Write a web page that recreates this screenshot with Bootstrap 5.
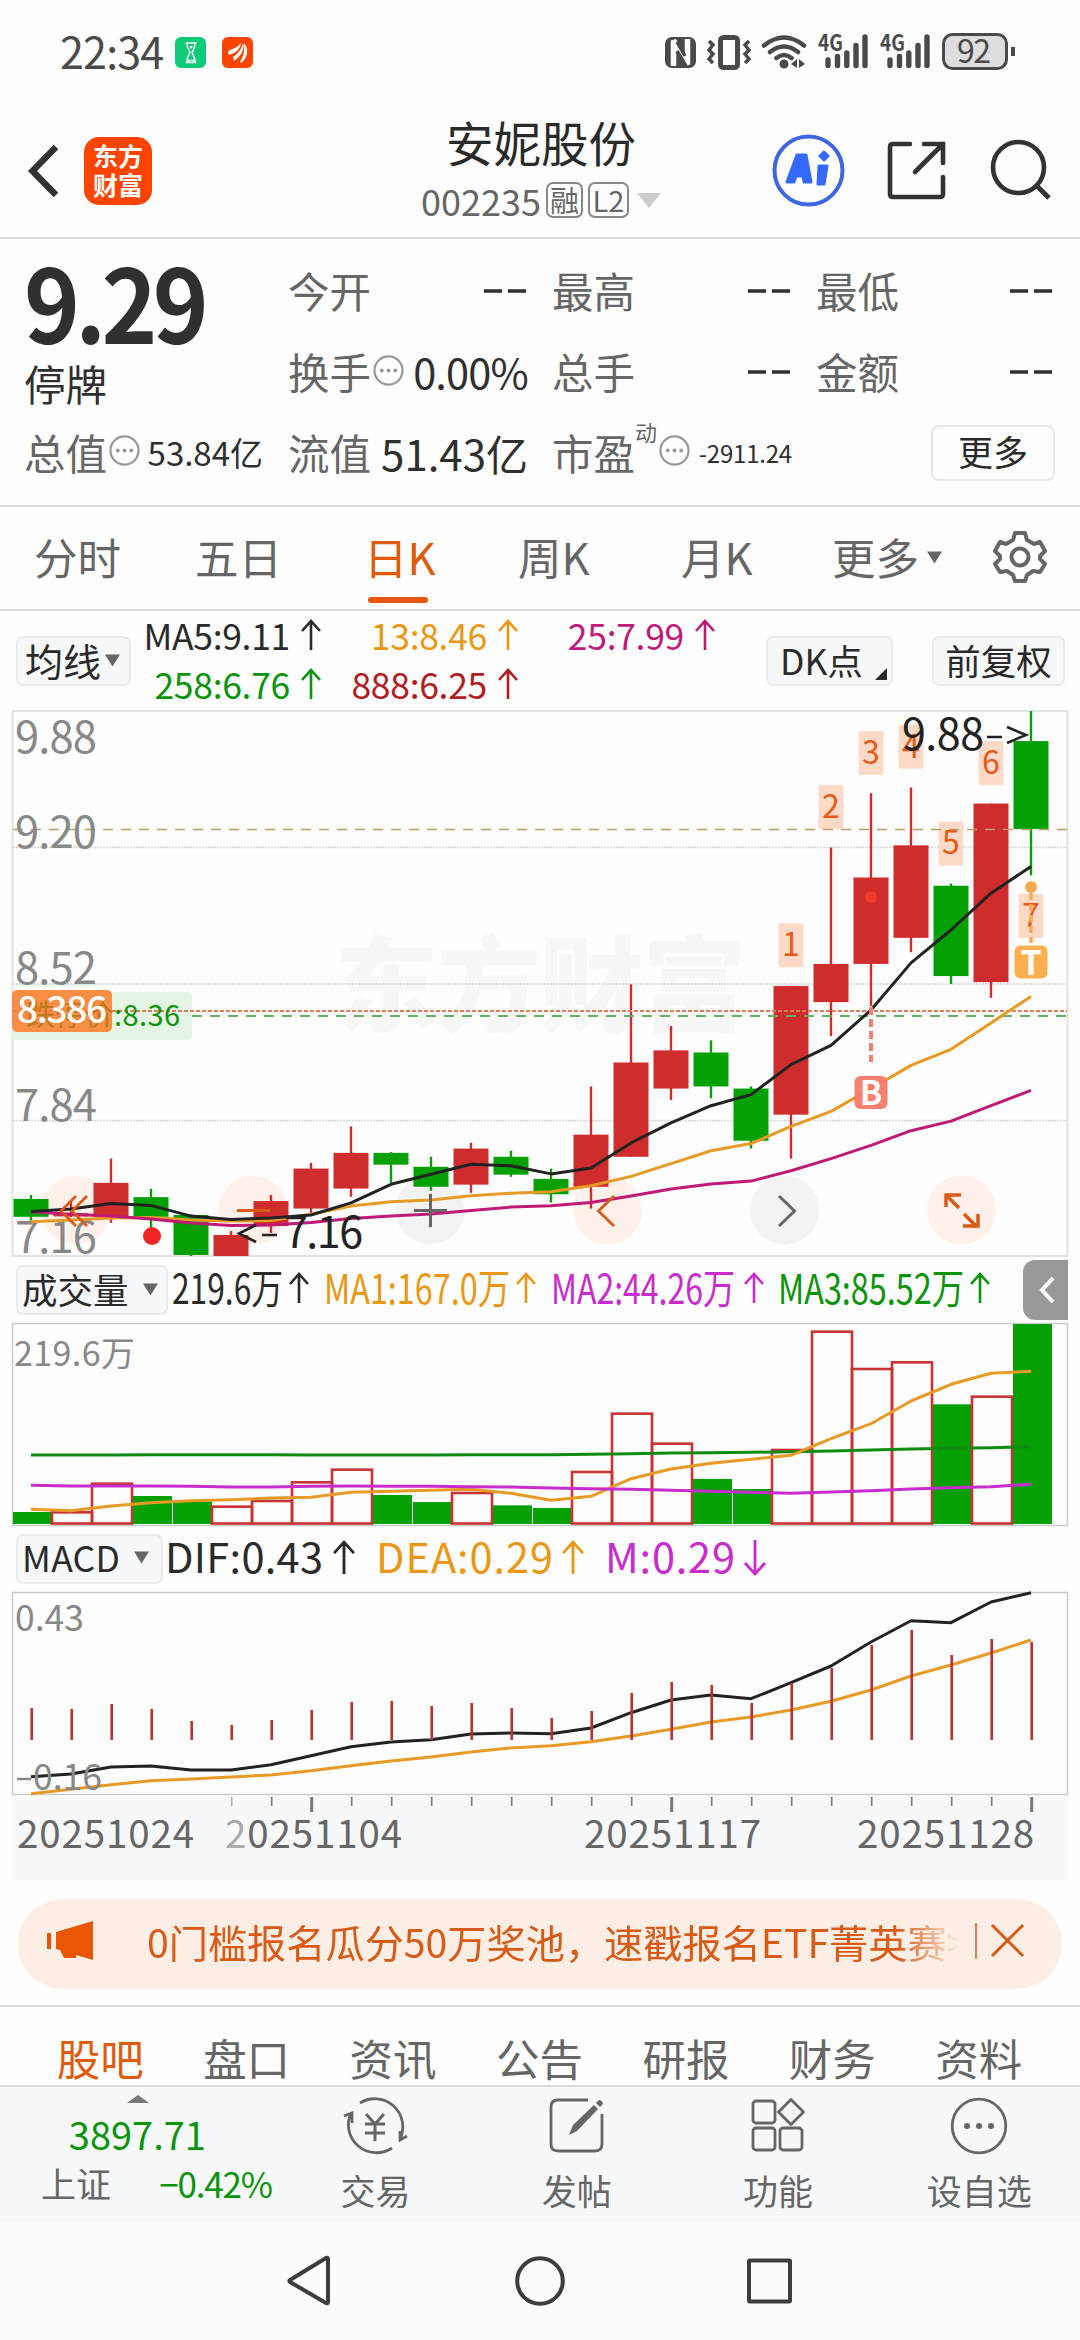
<!DOCTYPE html>
<html lang="zh-CN">
<head>
<meta charset="utf-8">
<meta name="viewport" content="width=device-width, initial-scale=1">
<title>安妮股份 002235</title>
<link rel="stylesheet" href="https://cdn.jsdelivr.net/npm/bootstrap@5.3.0/dist/css/bootstrap.min.css">
<style>
body{width:1080px;height:2340px;overflow:hidden;background:#fefefe;color:#2a2a2a;font-family:"Noto Sans CJK SC",sans-serif;font-weight:400;line-height:1;white-space:nowrap}
svg{display:block;flex:none;overflow:visible}
svg text{font-family:"Noto Sans CJK SC",sans-serif}
.statusbar{height:104px;padding:2px 64px 0 60px;color:#4a4a4a}
.clock{font-size:43px;letter-spacing:-.8px;width:115px;margin-top:-5px}
.apphead{height:135px;border-bottom:2px solid #dcdcdc;padding:0 28px 0 28px}
.brandlogo{width:68px;height:68px;border-radius:15px;background:#ff4400;color:#fff;font-size:25px;font-weight:700;line-height:29px;padding-top:4px;text-align:center}
.stockname{font-size:47.5px;line-height:56px;margin-top:-9px}
.code{font-size:36px;color:#666}
.boxed{border:2px solid #888;border-radius:7px;height:36px;font-size:29px;color:#666;line-height:30px;text-align:center}
.quote{height:268px;border-bottom:2px solid #dcdcdc;display:grid;grid-template-columns:240px 240px 240px 239px;column-gap:24px;grid-template-rows:81px 81px 81px;padding:11px 0 0 24px;font-size:41.5px;color:#666}
.quote .val{color:#2f2f2f}
.bigprice{font-size:102px;font-weight:700;letter-spacing:-5px;color:#303030;line-height:100px;height:93px;transform:scaleX(.93);transform-origin:0 0}
.halt{color:#2f2f2f;font-size:41.5px;line-height:60px}
.morebtn{width:124px;height:56px;border:2px solid #e8e8e8;border-radius:8px;font-size:35px;color:#2a2a2a;line-height:48px;text-align:center}
.periods{height:104px;border-bottom:2px solid #dcdcdc;display:grid;grid-template-columns:161px 169px 154px 163px 151px 157px 60px;padding:0 0 2px 34px;font-size:43.5px;color:#666;align-items:center}
.orange{color:#e05a0c}
.underbar{left:4px;top:62px;width:60px;height:6px;border-radius:3px;background:#e8540a}
.legend1{height:99px;padding:0 15px 0 16px}
.chip{background:#f7f8fa;border:2px solid #e9eaec;border-radius:7px;height:50px;color:#2a2a2a;line-height:1;padding-bottom:2px}
.mavals{display:grid;grid-template-columns:190px 197px 197px;grid-template-rows:49px 49px;font-size:35.5px;letter-spacing:-.3px;width:586px;margin-top:-1px}
.mavals>div{display:flex;justify-content:flex-end;align-items:center;gap:11px}
.legend2{height:66px;padding-left:16px}
.foldtab{width:45px;height:60px;border-radius:12px 0 0 12px;background:#999;margin-left:auto;margin-right:12px;padding:16px 0 0 16px}
.banner{margin:19px 18px 0 18px;height:90px;border-radius:45px;background:#fdeee5;color:#d95a16;font-size:39.2px;padding:0 36px 6px 29px}
.ticker{width:813px;overflow:hidden;line-height:60px;-webkit-mask-image:linear-gradient(90deg,#000 750px,transparent 812px);mask-image:linear-gradient(90deg,#000 750px,transparent 812px)}
.sections{margin-top:16px;height:80px;border-top:2px solid #dadadc;padding:24px 28px 0 27px;font-size:43.5px;color:#666}
.sections>div{flex:1 1 0;text-align:center;line-height:54px}
.dock{height:137px;border-top:2px solid #d8d9dd;background:#f7f8fa;color:#666;font-size:35px}
.idx{width:275px}
.dockitem{width:201.5px;padding-top:9px;display:flex;flex-direction:column;align-items:center}
.dockitem span{line-height:40px;margin-top:14px}
.green{color:#0b930b}
.sysnav{height:119px;background:#fcfcfc}
</style>
</head>
<body>
<svg width="0" height="0" class="position-absolute"><defs>
<symbol id="up" viewBox="0 0 20 32"><path d="M10 31V2M1 12L10 2l9 10" fill="none" stroke="currentColor" stroke-width="2.6"/></symbol>
<symbol id="info" viewBox="0 0 30 30"><circle cx="15" cy="15" r="13.6" fill="none" stroke="#999" stroke-width="2.2"/><g fill="#999"><circle cx="8.5" cy="15" r="1.9"/><circle cx="15" cy="15" r="1.9"/><circle cx="21.500" cy="15" r="1.9"/></g></symbol>
<symbol id="down" viewBox="0 0 16 13"><path d="M0 0h16L8 13z" fill="#666"/></symbol>
</defs></svg>

<header class="statusbar d-flex align-items-center">
  <div class="clock">22:34</div>
  <svg width="80" height="32" viewBox="0 0 80 32"><rect width="31" height="31" rx="6" fill="#0ecb78"/><path d="M10.500 6h11M10.500 25.500h11M12 6c0 6 1.500 6.500 3 9.500-1.500 3-3 4-3 9.500M20 6c0 6-1.500 6.500-3 9.500 1.500 3 3 4 3 9.500M13 23.500h6" fill="none" stroke="#fff" stroke-width="1.500"/><path d="M14 9h4l-2 3z" fill="#fff"/><rect x="47" width="31" height="31" rx="6" fill="#ff4400"/><path d="M53 14c4-2 9-3 13-8-1 7-6 10-12 12zM58 20c5-3 8-7 10-14 2 6-2 13-9 18zM65 25c3-5 5-10 4-19 5 6 4 15-3 20z" fill="#fff"/></svg>
  <svg class="ms-auto" width="352" height="40" viewBox="664 33 352 40" fill="none" stroke="#4a4a4a">
    <rect x="665" y="37" width="31" height="31" rx="7" fill="#4a4a4a" stroke="none"/><path d="M673.500 66V40.500L687.500 64.500V39" stroke="#fff" stroke-width="5.500" stroke-linejoin="bevel"/><path d="M677 42L685 56M677 51L686 66" stroke="#4a4a4a" stroke-width="3.500"/>
    <rect x="720.500" y="37.500" width="17" height="30" rx="3" stroke-width="5"/><path d="M709 41l4 4-4 5 4 4-4 5 4 4M749 41l-4 4 4 5-4 4 4 5-4 4" stroke-width="3.5"/>
    <path d="M764 45.500q20-16 40 0M770 52q14-11 28 0M776.500 58q7.500-6 15 0" stroke-width="4.500" stroke-linecap="round"/><circle cx="784" cy="64" r="4.500" fill="#4a4a4a" stroke="none"/><path d="M791 64l6-5v9zM805 64l-6-5v9z" fill="#4a4a4a" stroke="none"/>
    <g id="sig"><text x="818" y="51" font-size="22" font-weight="700" textLength="25" lengthAdjust="spacingAndGlyphs" fill="#4a4a4a" stroke="none">4G</text><path d="M828 60v5.500M837.500 56.500v9M846.800 53v12.500M856 45.500v20M865 37v28.500" stroke-width="5.400" stroke-linecap="round"/></g><use href="#sig" x="62"/>
    <rect x="943.500" y="34.500" width="63" height="34" rx="9" stroke-width="3" fill="#ddd"/><text x="957" y="63" font-size="32" fill="#4a4a4a" stroke="none" textLength="34">92</text><path d="M1013 47v9" stroke-width="4"/>
  </svg>
</header>

<nav class="apphead d-flex align-items-center">
  <svg width="32" height="54" viewBox="0 0 32 54"><path d="M28 3L4.500 27 28 51" fill="none" stroke="#333" stroke-width="6.500"/></svg>
  <div class="brandlogo ms-4">东方<br>财富</div>
  <div class="flex-grow-1 d-flex flex-column align-items-center" style="padding-left:160px">
    <div class="stockname">安妮股份</div>
    <div class="d-flex align-items-center" style="margin-top:12px"><span class="code">002235</span><span class="boxed" style="width:37px;margin-left:5px">融</span><span class="boxed" style="width:41px;margin-left:5px">L2</span><svg class="ms-2" width="24" height="15"><path d="M0 0h24L12 15z" fill="#ccc"/></svg></div>
  </div>
  <svg width="282" height="80" viewBox="770 132 282 80" fill="none" stroke="#333" stroke-width="4.600">
    <circle cx="808.500" cy="171.500" r="34" stroke="#3e66e0" stroke-width="4"/>
    <g fill="#3568ff" stroke="#3568ff" stroke-width="3" stroke-linejoin="round"><path fill-rule="evenodd" d="M797 156h9l5 27h-7l-1-6h-7l-2 6h-7zM802 165l-3 8h4zM819 167h8l-3 18h-6zM824 153l4 4-4 4-4-4z"/></g>
    <path d="M910 145h-17q-3 0-3 3v47q0 3 3 3h47q3 0 3-3v-17M924 145h19v19M943 145L915 173" stroke-linecap="round"/>
    <circle cx="1018.500" cy="168.500" r="25.500"/><path d="M1037 187l12 12" stroke-width="5"/>
  </svg>
</nav>

<section class="quote">
  <div style="grid-row:span 2"><div class="bigprice">9.29</div><div class="halt" style="margin-top:10px">停牌</div></div>
  <div class="d-flex justify-content-between align-items-center">今开<span class="val"><svg width="44" height="4"><path d="M0 2h18M24 2h18" stroke="#2f2f2f" stroke-width="3.500"/></svg></span></div>
  <div class="d-flex justify-content-between align-items-center">最高<span class="val"><svg width="44" height="4"><path d="M0 2h18M24 2h18" stroke="#2f2f2f" stroke-width="3.500"/></svg></span></div>
  <div class="d-flex justify-content-between align-items-center">最低<span class="val"><svg width="45" height="4"><path d="M0 2h18M24 2h18" stroke="#2f2f2f" stroke-width="3.500"/></svg></span></div>
  <div class="d-flex align-items-center">换手<svg width="31" height="31" style="margin:0 0 2px 2px"><use href="#info"/></svg><span class="val ms-auto" style="letter-spacing:-.8px">0.00%</span></div>
  <div class="d-flex justify-content-between align-items-center">总手<span class="val"><svg width="44" height="4"><path d="M0 2h18M24 2h18" stroke="#2f2f2f" stroke-width="3.500"/></svg></span></div>
  <div class="d-flex justify-content-between align-items-center">金额<span class="val"><svg width="45" height="4"><path d="M0 2h18M24 2h18" stroke="#2f2f2f" stroke-width="3.500"/></svg></span></div>
  <div class="d-flex align-items-center">总值<svg width="31" height="31" style="margin:0 0 4px 2px"><use href="#info"/></svg><span class="val ms-auto" style="font-size:33px;padding-right:1px">53.84亿</span></div>
  <div class="d-flex align-items-center">流值<span class="val ms-auto" style="font-size:42px">51.43亿</span></div>
  <div class="d-flex align-items-center">市盈<span style="font-size:22px;margin-bottom:43px">动</span><svg width="31" height="31" style="margin:0 0 4px 2px"><use href="#info"/></svg><span class="val ms-auto" style="font-size:24px;letter-spacing:-.2px">-2911.24</span></div>
  <div class="d-flex align-items-center justify-content-end"><div class="morebtn">更多</div></div>
</section>

<nav class="periods">
  <div>分时</div><div>五日</div><div class="orange position-relative">日K<span class="underbar position-absolute"></span></div><div>周K</div><div>月K</div>
  <div class="d-flex align-items-center">更多<svg class="ms-2" width="15" height="13"><use href="#down"/></svg></div>
  <svg class="ms-1" width="54" height="54" viewBox="-27 -27 54 54" fill="none" stroke="#666" stroke-width="4" stroke-linejoin="round"><path d="M-5-24H5L7-17 14-13 20-15 25-6 20-1V2L25 7 20 15 13 14 7 18 5 24H-5L-7 18-13 14-20 15-25 7-20 2V-1L-25-6-20-15-14-13-7-17z"/><circle r="8.500"/></svg>
</nav>

<section class="legend1 d-flex align-items-start">
  <div class="chip d-flex align-items-center" style="width:115px;margin-top:25px;padding-left:7px;font-size:38px">均线<svg class="ms-1" width="15" height="13"><use href="#down"/></svg></div>
  <div class="mavals">
    <div>MA5:9.11<svg width="20" height="32"><use href="#up"/></svg></div>
    <div style="color:#ea9716">13:8.46<svg width="20" height="32"><use href="#up"/></svg></div>
    <div style="color:#c01a78">25:7.99<svg width="20" height="32"><use href="#up"/></svg></div>
    <div class="green">258:6.76<svg width="20" height="32"><use href="#up"/></svg></div>
    <div style="color:#b01c24">888:6.25<svg width="20" height="32"><use href="#up"/></svg></div>
  </div>
  <div class="chip d-flex align-items-center position-relative" style="width:127px;margin-top:25px;margin-left:49px;padding-left:12px;font-size:35.5px">DK点<svg class="position-absolute" style="right:4px;bottom:4px" width="12" height="12"><path d="M12 0v12H0z" fill="#2a2a2a"/></svg></div>
  <div class="chip d-flex align-items-center justify-content-center ms-auto" style="width:133px;margin-top:25px;font-size:35.5px">前复权</div>
</section>

<svg id="kline" width="1080" height="547" viewBox="0 710 1080 547"></svg>

<section class="legend2 d-flex align-items-center">
  <div class="chip d-flex align-items-center" style="width:152px;padding-left:4px;font-size:35.5px">成交量<svg style="margin-left:14px" width="15" height="13"><use href="#down"/></svg></div>
  <svg width="825" height="50" viewBox="168 1264 825 50" font-size="41">
    <g fill="#2a2a2a" color="#2a2a2a"><text x="172" y="1303" textLength="111" lengthAdjust="spacingAndGlyphs">219.6万</text><use href="#up" x="289" y="1269" width="20" height="36"/></g>
    <g fill="#ea9716" color="#ea9716"><text x="324" y="1303" textLength="186" lengthAdjust="spacingAndGlyphs">MA1:167.0万</text><use href="#up" x="516" y="1269" width="20" height="36"/></g>
    <g fill="#c82ccc" color="#c82ccc"><text x="551" y="1303" textLength="184" lengthAdjust="spacingAndGlyphs">MA2:44.26万</text><use href="#up" x="744" y="1269" width="20" height="36"/></g>
    <g fill="#0b930b" color="#0b930b"><text x="778" y="1303" textLength="186" lengthAdjust="spacingAndGlyphs">MA3:85.52万</text><use href="#up" x="970" y="1269" width="20" height="36"/></g>
  </svg>
  <div class="foldtab"><svg width="16" height="28"><path d="M14 2L3 14l11 12" fill="none" stroke="#fff" stroke-width="4"/></svg></div>
</section>

<svg id="volume" width="1080" height="203" viewBox="0 1323 1080 203"></svg>

<section class="legend2 d-flex align-items-center">
  <div class="chip d-flex align-items-center" style="width:147px;padding-left:4px;font-size:35.5px;letter-spacing:.3px;padding-bottom:4px">MACD<svg style="margin-left:14px" width="15" height="13"><use href="#down"/></svg></div>
  <svg width="620" height="50" viewBox="163 1533 620 50" font-size="41.5">
    <g fill="#2a2a2a" color="#2a2a2a"><text x="165" y="1572" textLength="158">DIF:0.43</text><use href="#up" x="333" y="1538" width="22" height="37"/></g>
    <g fill="#ea9716" color="#ea9716"><text x="376" y="1572" textLength="177">DEA:0.29</text><use href="#up" x="562" y="1538" width="22" height="37"/></g>
    <g fill="#c82ccc" color="#c82ccc"><text x="605" y="1572" textLength="130">M:0.29</text><path d="M755 1539v34M745 1562l10 11 10-11" fill="none" stroke="currentColor" stroke-width="2.800"/></g>
  </svg>
</section>

<svg id="macd" width="1080" height="288" viewBox="0 1592 1080 288"></svg>

<div class="banner d-flex align-items-center">
  <svg width="47" height="40"><path d="M0 12h4v16H0zM9 11L46 0v39L29 34v3H17l-4-8-4-1z" fill="#ea5504"/></svg>
  <div class="ticker" style="margin-left:53px">0门槛报名瓜分50万奖池，速戳报名ETF菁英赛&gt;</div>
  <svg class="ms-auto" width="52" height="36" fill="none" stroke="#d95a16"><path d="M2 0v36" stroke-width="1.500"/><path d="M18 2l31 31M49 2L18 33" stroke-width="3"/></svg>
</div>

<nav class="sections d-flex"><div class="orange">股吧</div><div>盘口</div><div>资讯</div><div>公告</div><div>研报</div><div>财务</div><div>资料</div></nav>

<footer class="dock d-flex">
  <div class="idx">
    <svg style="margin:8px 0 0 127px" width="22" height="8"><path d="M0 8L11 0l11 8z" fill="#77777b"/></svg>
    <div class="green text-center" style="font-size:38px;line-height:48px;margin-top:7px">3897.71</div>
    <div class="d-flex justify-content-between" style="padding:8px 3px 0 41px;line-height:34px"><span>上证</span><span class="green" style="font-size:35px;letter-spacing:-1.2px">−0.42%</span></div>
  </div>
  <div class="dockitem"><svg width="68" height="60" viewBox="-34 -30 68 60" fill="none" stroke="#666" stroke-width="2.800"><path d="M-15-23A28 28 0 0 1 25 13M17 22A28 28 0 0 1-24-13M-31-10l8-3v10M32 10l-7 4v-9"/><path d="M-9-12L0-2 9-12M0-2v17M-10-2h20M-10 7h20" stroke-width="3"/></svg><span>交易</span></div>
  <div class="dockitem"><svg width="60" height="60" viewBox="-30 -30 60 60" fill="none" stroke="#666" stroke-width="2.800"><path d="M11-26H-19q-7 0-7 7V18q0 7 7 7H18q7 0 7-7V-12"/><path d="M-8 9l4-10L17-21l4 4L0 5zM19-23l3-3q3 0 4 4l-3 3z" fill="#666" stroke="none"/></svg><span>发帖</span></div>
  <div class="dockitem"><svg width="60" height="60" viewBox="-30 -30 60 60" fill="none" stroke="#666" stroke-width="2.800"><rect x="-25" y="-25" width="22" height="22" rx="3"/><rect x="-25" y="2" width="22" height="22" rx="3"/><rect x="2" y="2" width="22" height="22" rx="3"/><path d="M13-26.500L25.500-14 13-1.500.5-14z" stroke-linejoin="round"/></svg><span>功能</span></div>
  <div class="dockitem"><svg width="60" height="60" viewBox="-30 -30 60 60" fill="none" stroke="#666" stroke-width="2.800"><circle r="26.800"/><g fill="#666" stroke="none"><circle r="3" cx="-12"/><circle r="3"/><circle r="3" cx="12"/></g></svg><span>设自选</span></div>
</footer>
<div class="sysnav"><svg width="1080" height="118" viewBox="0 2222 1080 118" fill="none" stroke="#3d3d3d" stroke-width="4" stroke-linejoin="round"><path d="M328 2259v43q0 2-2 1L290 2282q-1-1 0-2l36-22q2-1 2 1z"/><circle cx="540" cy="2281" r="22.800"/><rect x="749" y="2260.500" width="41" height="41" rx="1"/></svg></div>

<script>
const cx = i => 31 + 40 * i;
const RED = '#cf2d2d', GREEN = '#04a004';
const line = (vals, y, color, w) => `<polyline points="${vals.map((v, i) => cx(i) + ',' + y(v).toFixed(1)).join(' ')}" fill="none" stroke="${color}" stroke-width="${w || 3}" stroke-linejoin="round"/>`;

/* Daily candles: up/down, high, body top, body bottom, low */
const yk = v => 700 + v / 2.8;
const candles = [['g',1386,1397,1447,1458],['r',1405,1437,1446,1448],['r',1284,1352,1447,1464],['g',1369,1392,1447,1478],['g',1440,1442,1554,1557],['r',1487,1498,1557,1557],['r',1386,1403,1473,1492],['r',1296,1312,1424,1437],['r',1194,1268,1368,1391],['g',1266,1268,1301,1352],['g',1279,1307,1363,1374],['r',1240,1256,1357,1380],['g',1262,1279,1329,1335],['g',1312,1341,1384,1407],['r',1082,1217,1363,1424],['r',796,1015,1279,1279],['r',913,981,1088,1120],['g',953,987,1082,1115],['g',1082,1088,1234,1256],['r',801,801,1161,1284],['r',413,739,846,941],['r',261,497,739,857],['r',245,407,666,706],['g',514,520,773,795],['r',290,290,790,834],['g',31,115,361,491]];
const ma5=[1432,1425,1410,1415,1445,1455,1450,1442,1408,1356,1328,1300,1304,1327,1310,1240,1184,1136,1105,1021,967,868,736,644,541,466];
const ma13=[1461,1456,1450,1449,1456,1459,1457,1440,1417,1405,1400,1388,1381,1377,1360,1334,1298,1262,1242,1194,1152,1088,1023,978,904,830];
const ma25=[1433,1440,1445,1453,1464,1471,1470,1463,1452,1445,1439,1429,1420,1416,1407,1389,1369,1355,1347,1318,1284,1247,1206,1179,1136,1093];
let k = `<rect x="12.500" y="711" width="1055" height="545" fill="none" stroke="#e2e2e2" stroke-width="2"/>
<text x="334" y="1024" font-size="104" font-weight="900" fill="#f7f7f7" textLength="412">东方财富</text>`;
[847.5, 984, 1120.5].forEach(y => k += `<path d="M13 ${y}H1067" stroke="#d4d4d4" stroke-width="1.500" stroke-dasharray="2 1"/>`);
/* circular chart controls sit under the candles */
[[76,1],[253,1],[430,0],[607.5,1],[784.5,0],[961.5,1]].forEach(([x, o]) => k += `<circle cx="${x}" cy="1210" r="34.500" fill="${o ? '#fff1ea' : '#f3f3f3'}"/>`);
candles.forEach(([c, h, t, b, l], i) => { const f = c == 'r' ? RED : GREEN;
  k += `<path d="M${cx(i)} ${yk(h)}V${yk(l)}" stroke="${f}" stroke-width="2.400"/><rect x="${cx(i) - 17.5}" y="${yk(t)}" width="35" height="${yk(b) - yk(t)}" fill="${f}"/>`; });
[['1',19,625],['2',20,238],['3',21,87],['4',22,69],['5',23,340],['6',24,115],['7',25,543]].forEach(([n, i, v]) =>
  k += `<rect x="${cx(i) - 12.5}" y="${yk(v)}" width="25" height="44" rx="2" fill="#fdd9c8"/><text x="${cx(i)}" y="${yk(v) + 33}" font-size="32" fill="#e85a14" text-anchor="middle">${n}</text>`);
k += `<path d="M13 829.500H1067" stroke="#bd9a68" stroke-width="1.400" stroke-dasharray="10 8"/>
<rect x="12" y="992" width="180" height="48" rx="5" fill="#e4f5e4"/>
<path d="M192 1016H1067" stroke="#63b063" stroke-width="2" stroke-dasharray="10 8"/><path d="M112 1011H1067" stroke="#dc7f58" stroke-width="2" stroke-dasharray="4 2"/>
<rect x="12" y="990" width="100" height="42" rx="5" fill="#f88e46"/><text x="26" y="1026" font-size="29" fill="#0b930b" textLength="154"><tspan fill="#c07818">跌停价</tspan>:8.36</text><path d="M13 1011h98" stroke="#dd6a20" stroke-dasharray="4 2"/>
<text x="17" y="1023" font-size="37" fill="#fff" font-weight="500" textLength="90">8.386</text>`;
[[9.88,753],['9.20',848],[8.52,984],[7.84,1121],[7.16,1253]].forEach(([s, y]) => k += `<text x="15" y="${y}" font-size="43.500" fill="#888" textLength="82">${s}</text>`);
k += line(ma13, yk, '#e89a26') + line(ma25, yk, '#bf1a76') + line(ma5, yk, '#222');
k += `<g fill="none" stroke="#d95a16" stroke-width="2.800"><path d="M76 1196l-15 15 15 15M87 1196l-15 15 15 15M237 1210.500h33M614 1196l-15.500 15 15.500 15"/><path d="M959 1208l-13-13M946 1207v-12h15M964 1214l13 13M978 1214v12h-15" stroke-width="3.500"/></g>
<g fill="none" stroke="#666" stroke-width="3"><path d="M414 1210.500h33M430.500 1194v33"/><path d="M779 1196l15.500 15-15.500 15"/></g>
<circle cx="152" cy="1236" r="9" fill="#f12626"/><circle cx="871" cy="897" r="6" fill="#f03c2c"/>
<path d="M256 1225l-17 8.500 17 8.500M262 1235h15M1007 727l19 8-19 8M987 737h15" fill="none" stroke="#222" stroke-width="2.600"/>
<text x="284" y="1248" font-size="43" fill="#222" textLength="79">7.16</text><text x="902" y="750" font-size="43" fill="#222" textLength="82">9.88</text>
<path d="M871 1007v55" stroke="#f08070" stroke-width="4" stroke-dasharray="8 4"/><rect x="854.500" y="1076" width="33" height="33" rx="6" fill="#f87868" fill-opacity=".94"/><text x="871" y="1105" font-size="33" font-weight="700" fill="#fff" text-anchor="middle">B</text>
<circle cx="1031" cy="887" r="6" fill="#fbab4e"/><path d="M1031 893v50" stroke="#fbab4e" stroke-width="3.500" stroke-dasharray="7 4"/><rect x="1014.500" y="945.500" width="33" height="33" rx="6" fill="#ffb04e"/><text x="1031" y="975" font-size="34" font-weight="700" fill="#fff" text-anchor="middle">T</text>`;
document.getElementById('kline').innerHTML = k;

/* Volume */
const yv = v => 1250 + v / 3;
const vols = [786,787,701,738,754,770,753,697,659,735,756,729,766,774,666,491,581,687,717,600,245,357,337,463,440,222];
const v1 = [778,782,768,758,752,749,744,742,727,724,721,718,730,751,739,686,657,640,628,616,566,521,453,403,370,364];
const v2 = [706,708,708,708,709,711,711,709,708,709,709,710,711,714,716,718,721,724,727,730,726,722,717,713,710,703];
const v3 = [615,615,615,614,614,614,614,615,615,615,615,614,614,614,613,611,609,608,607,605,603,600,597,595,593,590];
let s = `<rect x="12.500" y="1323.500" width="1055" height="202" fill="none" stroke="#cbcbcb" stroke-width="1.500"/><text x="14" y="1366" font-size="34" fill="#888" textLength="121">219.6万</text>`;
vols.forEach((t, i) => s += candles[i][0] == 'r'
  ? `<rect x="${cx(i) - 19}" y="${yv(t)}" width="40" height="${1523.5 - yv(t)}" fill="none" stroke="#c83434" stroke-width="2.600"/>`
  : `<rect x="${cx(i) - 18}" y="${yv(t)}" width="39" height="${1524 - yv(t)}" fill="${GREEN}"/>`);
s += line(v3, yv, '#118a11') + line(v1, yv, '#e89a26') + line(v2, yv, '#c82ccc');
document.getElementById('volume').innerHTML = s;

/* MACD and date axis */
const ym = v => 1530 + v / 3;
const bars = [534,537,522,537,573,585,570,540,516,513,528,519,534,564,543,489,456,465,519,459,414,345,300,375,327,336];
const dif = [740,732,711,708,720,720,704,677,650,636,629,612,609,611,594,548,510,495,506,458,408,336,272,278,216,188];
const dea = [791,778,764,752,747,741,735,722,707,693,681,666,654,647,635,618,598,576,561,540,514,480,438,405,369,330];
let m = `<rect x="12.500" y="1592.500" width="1055" height="202" fill="none" stroke="#cbcbcb" stroke-width="1.500"/><rect x="12" y="1797" width="1056" height="83" fill="#f7f8fa"/>`;
m += line(dea, ym, '#e89a26') + line(dif, ym, '#222');
bars.forEach((t, i) => { m += `<path d="M${cx(i) + .7} ${ym(t)}V1740" stroke="#bb3030" stroke-width="2.600"/>`;
  if (i > 4) m += `<path d="M${cx(i) + .7} 1797v${(i - 7) % 9 ? 9 : 15}" stroke="${i == 5 ? '#b0b0b0' : '#777'}" stroke-width="${(i - 7) % 9 ? 1.6 : 3}"/>`; });
m += `<g fill="#888" font-size="35.500"><text x="15" y="1631" textLength="69">0.43</text><path d="M17 1779h14" stroke="#888" stroke-width="2.500"/><text x="33" y="1790" textLength="69">0.16</text></g>
<g fill="#666" font-size="38.500"><text x="17" y="1848" textLength="177">20251024</text><text x="225" y="1848" textLength="177"><tspan fill="#aaa">2</tspan>0251104</text><text x="584" y="1848" textLength="177">20251117</text><text x="857" y="1848" textLength="177">20251128</text></g>`;
document.getElementById('macd').innerHTML = m;
</script>
<script src="https://cdn.jsdelivr.net/npm/bootstrap@5.3.0/dist/js/bootstrap.bundle.min.js"></script>
</body>
</html>
